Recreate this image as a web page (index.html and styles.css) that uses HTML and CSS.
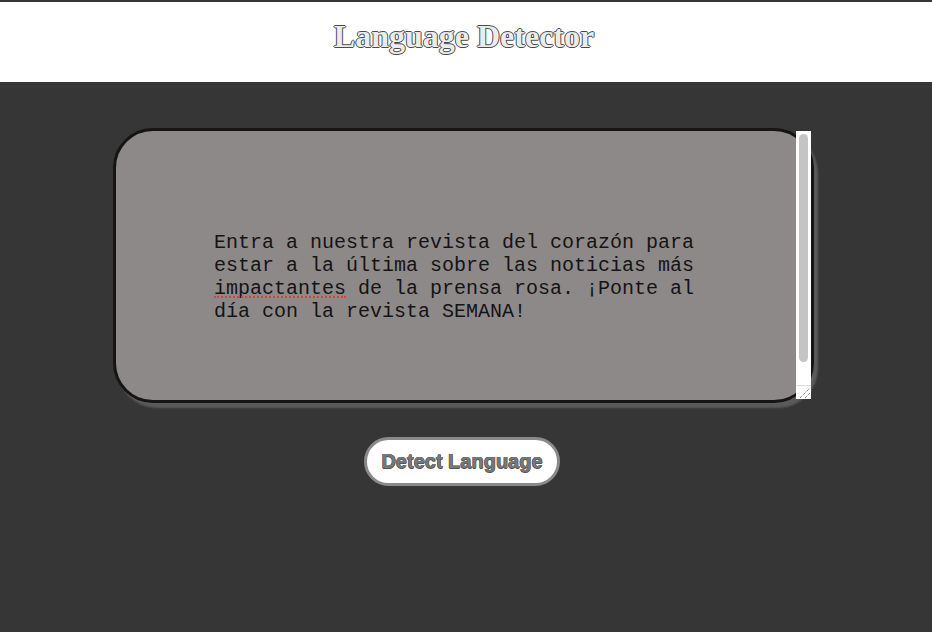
FILE: index.html
```html
<!DOCTYPE html>
<html lang="es">
<head>
<meta charset="utf-8">
<title>Language Detector</title>
<link rel="stylesheet" href="styles.css">
</head>
<body>
<header class="site-header">
  <h1 class="site-title">Language Detector</h1>
</header>
<main class="main">
  <div class="editor">
    <textarea class="input-text" spellcheck="false">Entra a nuestra revista del corazón para estar a la última sobre las noticias más impactantes de la prensa rosa. ¡Ponte al día con la revista SEMANA!</textarea>
    <span class="spell-mark" aria-hidden="true"></span>
    <div class="fake-scrollbar" aria-hidden="true">
      <div class="fake-track"><div class="fake-thumb"></div></div>
      <div class="fake-resizer">
        <svg width="14" height="13" viewBox="0 0 14 13">
          <path d="M3 12 L13 2 M8 12 L13 7" stroke="#555" stroke-width="1" stroke-dasharray="1 1" fill="none"/>
        </svg>
      </div>
    </div>
  </div>
  <button class="detect-btn" type="button">Detect Language</button>
</main>
</body>
</html>
```
FILE: styles.css
```css
html, body {
  margin: 0;
  padding: 0;
  height: 100%;
}
body {
  background: #363636;
  padding-top: 2px;
  box-sizing: border-box;
  overflow: hidden;
}
.site-header {
  background: #ffffff;
  height: 80px;
  display: flex;
  justify-content: center;
}
.site-title {
  margin: 0;
  padding-top: 15px;
  padding-right: 4px;
  font-family: "Liberation Serif", "Times New Roman", serif;
  font-weight: bold;
  font-size: 32px;
  line-height: 38px;
  color: #ececec;
  text-shadow: 1px 0 0 #4a4a4a, -1px 0 0 #4a4a4a, 0 1px 0 #4a4a4a, 0 -1px 0 #4a4a4a;
}
.main {
  display: flex;
  flex-direction: column;
  align-items: center;
  padding-top: 46px;
  padding-right: 5px;
}
.editor {
  position: relative;
  width: 701px;
  height: 275px;
}
.input-text {
  display: block;
  box-sizing: border-box;
  width: 701px;
  height: 275px;
  margin: 0;
  padding: 100px 100px 100px 98px;
  background: #8e8989;
  border: 3px solid #161414;
  border-radius: 40px;
  box-shadow: 4px 5px 2px #5a5a5a;
  font-family: "Liberation Mono", "Courier New", monospace;
  font-size: 20px;
  line-height: 23px;
  color: #141414;
  overflow: hidden;
  resize: none;
  outline: none;
}
.spell-mark {
  position: absolute;
  left: 101px;
  top: 168px;
  width: 132px;
  height: 0;
  border-bottom: 2px dotted #d9413f;
}
.fake-scrollbar {
  position: absolute;
  top: 3px;
  right: 3px;
  width: 15px;
  height: 268px;
  background: #ffffff;
  display: flex;
  flex-direction: column;
}
.fake-track {
  flex: 1;
  padding: 3px 3px 0 3px;
  border-bottom: 1px solid #dcdcdc;
}
.fake-thumb {
  width: 9px;
  height: 228px;
  background: #c4c4c4;
  border-radius: 5px;
}
.fake-resizer {
  height: 13px;
  display: flex;
  justify-content: flex-end;
  align-items: flex-end;
}
.fake-resizer svg {
  display: block;
}
.detect-btn {
  margin-top: 34px;
  margin-right: 3px;
  width: 196px;
  height: 49px;
  background: #ffffff;
  border: 3px solid #8a8a8a;
  border-radius: 25px;
  font-family: "Liberation Sans", Arial, sans-serif;
  font-weight: bold;
  font-size: 20px;
  color: #777777;
  text-shadow: 0.5px 0 0 #555, -0.5px 0 0 #555, 0 0.5px 0 #555, 0 -0.5px 0 #555;
  cursor: pointer;
  padding: 0;
}
```
